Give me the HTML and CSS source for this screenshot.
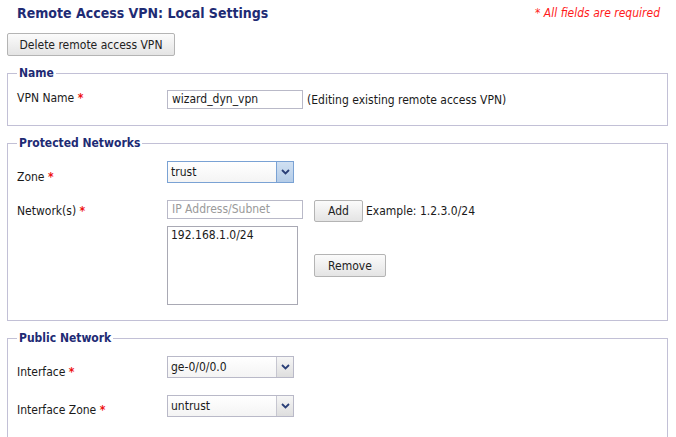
FILE: index.html
```html
<!DOCTYPE html>
<html>
<head>
<meta charset="utf-8">
<link rel="stylesheet" href="styles.css">
</head>
<body>
<div class="page">
  <div class="header">
    <h1 class="title">Remote Access VPN: Local Settings</h1>
    <span class="required-note">* All fields are required</span>
  </div>
  <button class="btn btn-delete">Delete remote access VPN</button>

  <fieldset class="group group-name">
    <legend>Name</legend>
    <div class="row row-name">
      <label class="lbl">VPN Name <span class="req">*</span></label>
      <div class="field">
        <div class="textbox tb-name">wizard_dyn_vpn</div>
        <span class="note">(Editing existing remote access VPN)</span>
      </div>
    </div>
  </fieldset>

  <fieldset class="group group-protected">
    <legend>Protected Networks</legend>
    <div class="row row-zone">
      <label class="lbl">Zone <span class="req">*</span></label>
      <div class="select select-active">
        <span class="select-text">trust</span>
        <span class="select-arrow"><svg width="9" height="6" viewBox="0 0 9 6"><path d="M1 1 L4.5 4.5 L8 1" fill="none" stroke="#2a3f77" stroke-width="1.8"/></svg></span>
      </div>
    </div>
    <div class="netgrid">
      <label class="lbl lbl-net">Network(s) <span class="req">*</span></label>
      <div class="netcol">
        <div class="textbox tb-ip placeholder">IP Address/Subnet</div>
        <div class="listbox">192.168.1.0/24</div>
      </div>
      <div class="btncol">
        <div class="addrow">
          <button class="btn btn-add">Add</button>
          <span class="note">Example: 1.2.3.0/24</span>
        </div>
        <button class="btn btn-remove">Remove</button>
      </div>
    </div>
  </fieldset>

  <fieldset class="group group-public">
    <legend>Public Network</legend>
    <div class="row row-iface">
      <label class="lbl">Interface <span class="req">*</span></label>
      <div class="select">
        <span class="select-text">ge-0/0/0.0</span>
        <span class="select-arrow"><svg width="9" height="6" viewBox="0 0 9 6"><path d="M1 1 L4.5 4.5 L8 1" fill="none" stroke="#2a3f77" stroke-width="1.8"/></svg></span>
      </div>
    </div>
    <div class="row row-izone">
      <label class="lbl">Interface Zone <span class="req">*</span></label>
      <div class="select">
        <span class="select-text">untrust</span>
        <span class="select-arrow"><svg width="9" height="6" viewBox="0 0 9 6"><path d="M1 1 L4.5 4.5 L8 1" fill="none" stroke="#2a3f77" stroke-width="1.8"/></svg></span>
      </div>
    </div>
  </fieldset>
</div>
</body>
</html>
```

FILE: styles.css
```css
html, body {
  margin: 0;
  padding: 0;
  background: #ffffff;
}
body {
  font-family: "DejaVu Sans Condensed", "DejaVu Sans", sans-serif;
  font-size: 12px;
  color: #1a1a1a;
}
.page {
  padding: 0 8px 0 7px;
}
.header {
  display: flex;
  justify-content: space-between;
  align-items: flex-start;
  height: 33px;
}
.title {
  margin: 4px 0 0 10px;
  font-size: 14px;
  line-height: 18px;
  font-weight: bold;
  color: #1e2b74;
}
.required-note {
  margin: 6px 8px 0 0;
  color: #ff1a1a;
  font-style: italic;
  font-size: 12px;
  line-height: 14px;
}
.btn {
  font-family: "DejaVu Sans Condensed", "DejaVu Sans", sans-serif;
  font-size: 12px;
  color: #222;
  background: linear-gradient(#fbfbfb, #e4e4e4);
  border: 1px solid #b4b4b4;
  border-radius: 2px;
  padding: 0;
  height: 23px;
  display: block;
}
.btn-delete {
  width: 168px;
  height: 23px;
}
.group {
  margin: 10px 0 0 0;
  border: 1px solid #c2c0d6;
  padding: 0 9px 16px 9px;
  min-width: 0;
}
.group legend {
  font-weight: bold;
  font-size: 12px;
  line-height: 14px;
  color: #1e2b74;
  padding: 0 2px;
  margin-left: 0;
}
.row {
  display: flex;
  align-items: flex-start;
}
.lbl {
  width: 150px;
  flex: none;
  font-size: 12px;
  line-height: 14px;
}
.req {
  color: #ee1111;
  font-weight: bold;
}
.field {
  display: flex;
  align-items: center;
  gap: 4px;
}
.textbox {
  box-sizing: border-box;
  height: 19px;
  border: 1px solid #b9b9c8;
  padding: 0 4px;
  line-height: 17px;
  font-size: 12px;
  background: #fff;
}
.tb-name {
  width: 136px;
}
.tb-ip {
  width: 136px;
}
.placeholder {
  color: #9a9a9a;
}
.note {
  font-size: 12px;
  color: #1a1a1a;
}
.row-name {
  margin-top: 10px;
}
.row-name .lbl {
  margin-top: 1px;
}

.group-protected {
  padding-bottom: 15px;
}
.row-zone {
  margin-top: 11px;
}
.row-zone .lbl {
  margin-top: 9px;
}
.select {
  box-sizing: border-box;
  width: 127px;
  height: 22px;
  border: 1px solid #b9b9c8;
  display: flex;
  background: linear-gradient(#ffffff, #f4f4f4);
}
.select-text {
  flex: 1;
  padding-left: 3px;
  line-height: 20px;
  font-size: 12px;
}
.select-arrow {
  width: 16px;
  border-left: 1px solid #c6c6d0;
  background: linear-gradient(#f6f6f6, #dedede);
  display: flex;
  align-items: center;
  justify-content: center;
}
.select-active {
  border-color: #7aa2d4;
}
.select-active .select-arrow {
  border-left-color: #7aa2d4;
  background: linear-gradient(#d0e0f2, #b4cce8);
}

.netgrid {
  display: flex;
  margin-top: 16px;
}
.lbl-net {
  margin-top: 4px;
}
.netcol {
  width: 147px;
  flex: none;
}
.listbox {
  box-sizing: border-box;
  margin-top: 7px;
  width: 131px;
  height: 79px;
  border: 1px solid #a9a9b4;
  padding: 1px 3px;
  font-size: 12px;
  line-height: 14px;
}
.addrow {
  display: flex;
  align-items: center;
  gap: 3px;
}
.btn-add {
  width: 49px;
  height: 22px;
}
.btn-remove {
  width: 72px;
  margin-top: 32px;
}

.group-public {
  padding-bottom: 30px;
}
.row-iface {
  margin-top: 11px;
}
.row-iface .lbl {
  margin-top: 9px;
}
.row-izone {
  margin-top: 16px;
}
.row-izone .lbl {
  margin-top: 8px;
}
```
